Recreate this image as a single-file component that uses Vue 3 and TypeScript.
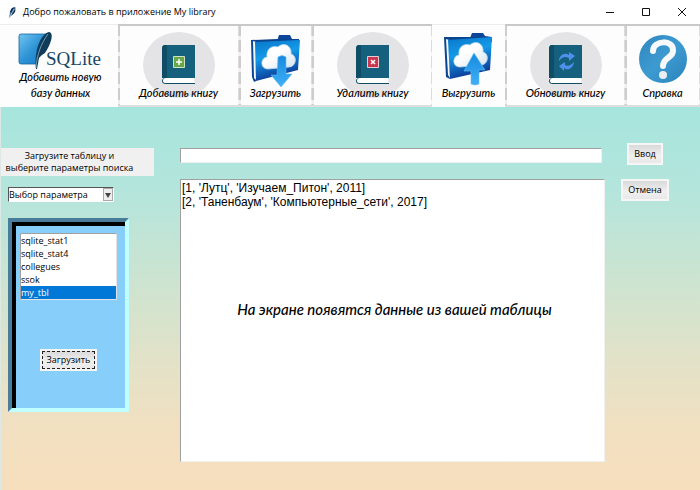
<script setup lang="ts">
import { ref } from 'vue'

type IconKind = 'sqlite' | 'book' | 'folder' | 'help'

interface Tool {
  label: string
  icon: IconKind
  variant?: 'add' | 'remove' | 'refresh' | 'down' | 'up'
  framed: boolean
}

const tools: Tool[] = [
  { label: 'Добавить новую\nбазу данных', icon: 'sqlite', framed: false },
  { label: 'Добавить книгу', icon: 'book', variant: 'add', framed: true },
  { label: 'Загрузить', icon: 'folder', variant: 'down', framed: true },
  { label: 'Удалить книгу', icon: 'book', variant: 'remove', framed: true },
  { label: 'Выгрузить', icon: 'folder', variant: 'up', framed: false },
  { label: 'Обновить книгу', icon: 'book', variant: 'refresh', framed: true },
  { label: 'Справка', icon: 'help', framed: true },
]

const tables = ['sqlite_stat1', 'sqlite_stat4', 'collegues', 'ssok', 'my_tbl']
const selectedTable = ref('my_tbl')
const parameter = ref('Выбор параметра')
const query = ref('')
const output = ref("[1, 'Лутц', 'Изучаем_Питон', 2011]\n[2, 'Таненбаум', 'Компьютерные_сети', 2017]")
</script>

<template>
  <div class="window">
    <header class="titlebar">
      <svg class="feather" viewBox="0 0 10 14" aria-hidden="true">
        <path d="M1 13 2 9C2 5 4 1 8 1c1 4-1 8-5 10Z" fill="#28507c" />
        <path d="M1 13 7 3M3 7l1 2" stroke="#a9cbea" fill="none" />
        <path d="M5 2 3 7M8 5 5 9" stroke="#111e36" fill="none" />
      </svg>
      <h1>Добро пожаловать в приложение My library</h1>
      <div class="controls">
        <button type="button" aria-label="Свернуть">
          <svg viewBox="0 0 10 10"><path d="M1 5.500H9" /></svg>
        </button>
        <button type="button" aria-label="Развернуть">
          <svg viewBox="0 0 10 10"><path d="M1.500 1.500h7v7h-7z" /></svg>
        </button>
        <button type="button" aria-label="Закрыть">
          <svg viewBox="0 0 10 10"><path d="m1 1 8 8M9 1 1 9" /></svg>
        </button>
      </div>
    </header>

    <nav class="toolbar">
      <button v-for="tool in tools" :key="tool.label" type="button" class="tool" :class="{ framed: tool.framed }">
        <svg v-if="tool.icon === 'sqlite'" class="wide" viewBox="0 0 121 83" aria-hidden="true">
          <defs>
            <linearGradient id="sq" x1="0" y1="0" x2="1" y2="1">
              <stop offset="0" stop-color="#72c5ef" /><stop offset="0.500" stop-color="#2e94d6" /><stop offset="1" stop-color="#1178c6" />
            </linearGradient>
          </defs>
          <path d="M21 10H47C40 16 36 27 37 40H21Q19 40 19 38V12Q19 10 21 10Z" fill="url(#sq)" stroke="#11649e" stroke-width="0.800" />
          <path d="M36 45C34 25 41 10 49 8C55 9 50 22 45 29Q41 31 39 34L37 45Z" fill="#103b59" />
          <path d="M36 44C37 30 41 20 48 10" stroke="#7fb4d0" stroke-width="0.800" fill="none" />
          <text x="46" y="41" class="brand">SQLite</text>
        </svg>

        <svg v-else-if="tool.icon === 'book'" class="wide" viewBox="0 0 121 83" aria-hidden="true">
          <ellipse cx="61" cy="41" rx="36" ry="33" fill="#e4e3e6" />
          <path d="M47 21H77V54H44V25Q44 21 47 21Z" fill="#15607d" />
          <path d="M47 21H49V54H44V25Q44 21 47 21Z" fill="#0f4c66" />
          <path d="M77 54H48Q44 54 44 57Q44 60 48 60H77V59H75V55H77Z" fill="#0f4c66" />
          <path d="M77 54H48Q45 54 45 57Q45 59 48 59H77L76 57Z" fill="#fff" />
          <g v-if="tool.variant === 'add'">
            <path d="M55.500 32.500h11v11h-11z" fill="#68a848" stroke="#cfe2c4" />
            <path d="M61 35v6M58 38h6" stroke="#fff" stroke-width="1.500" />
          </g>
          <g v-else-if="tool.variant === 'remove'">
            <path d="M55.500 32.500h11v11h-11z" fill="#c73750" stroke="#e9cdd3" />
            <path d="m59 36 4 4M63 36l-4 4" stroke="#fff" stroke-width="1.500" />
          </g>
          <g v-else fill="#4f8fee">
            <path d="M54 37C54 31 60 28 64 31V28L70 32 64 37V34C60 32 57 33 54 37Z" />
            <path d="M69 38C68 45 62 47 59 44V47L54 42 60 38V41C63 43 66 41 69 38Z" />
          </g>
        </svg>

        <svg v-else-if="tool.icon === 'folder'" class="narrow" viewBox="0 0 73 83" aria-hidden="true">
          <defs>
            <linearGradient id="cover" x1="0" y1="0" x2="0.300" y2="1">
              <stop offset="0" stop-color="#0875c8" /><stop offset="0.450" stop-color="#159ae8" /><stop offset="1" stop-color="#0b3794" />
            </linearGradient>
            <linearGradient id="arrow" x1="0" y1="0" x2="0" y2="1">
              <stop offset="0" stop-color="#1689df" /><stop offset="1" stop-color="#3fb0f7" />
            </linearGradient>
            <linearGradient id="cloud" x1="0" y1="0" x2="1" y2="1">
              <stop offset="0.400" stop-color="#fff" /><stop offset="1" stop-color="#d5e2ee" />
            </linearGradient>
          </defs>
          <g v-if="tool.variant === 'down'">
            <path d="M38 17 40 11H51L53 15 60 15V20H38Z" fill="#0d4598" />
            <path d="M12 16 38 15 60 15 17 20V57L15 58 13 53Z" fill="#0b458e" />
            <path d="M14 17 17 18V56L15 54Z" fill="#f3f8fc" />
            <path d="M16 18 61 16 59 46 17 57Z" fill="url(#cover)" />
            <path d="M29 45C21 45 21 34 28 33C27 25 33 21 39 23C46 17 53 23 52 30C59 32 57 43 50 43Z" fill="url(#cloud)" stroke="#b9d6ea" stroke-width="0.800" />
            <path d="M39 33Q43 30 47 33V50H53L42 63 32 51H38Z" fill="url(#arrow)" stroke="#66bdf2" stroke-width="0.600" />
          </g>
          <g v-else>
            <path d="M38 14 40 9H51L53 12 60 13V18H38Z" fill="#0d4598" />
            <path d="M12 13 38 13 60 13 16 18 18 55 14 53Z" fill="#0b458e" />
            <path d="M14 15 17 16 18 54 16 51Z" fill="#f3f8fc" />
            <path d="M16 16 60 13 58 46 18 55Z" fill="url(#cover)" />
            <path d="M28 43C20 43 20 32 27 31C26 23 32 19 38 21C45 15 52 21 51 28C58 30 56 41 49 41Z" fill="url(#cloud)" stroke="#b9d6ea" stroke-width="0.800" />
            <path d="M42 29 53 46H47V60Q43 62 39 60V47H32Z" fill="url(#arrow)" stroke="#66bdf2" stroke-width="0.600" />
          </g>
        </svg>

        <svg v-else class="narrow" viewBox="0 0 73 83" aria-hidden="true">
          <defs>
            <linearGradient id="help" x1="0" y1="0" x2="1" y2="1">
              <stop offset="0" stop-color="#2f86bd" /><stop offset="0.500" stop-color="#3d9bd2" /><stop offset="1" stop-color="#2b83bb" />
            </linearGradient>
          </defs>
          <circle cx="37" cy="35" r="24" fill="url(#help)" />
          <path d="M27 27C27 16 48 15 47 27C47 34 37 33 37 42" fill="none" stroke="#f7f9fa" stroke-width="6" stroke-linecap="round" />
          <circle cx="37" cy="51" r="4" fill="#eceff1" />
        </svg>
        <span class="caption">{{ tool.label }}</span>
      </button>
    </nav>

    <main class="workspace">
      <aside class="sidebar">
        <label class="hint" for="parameter">Загрузите таблицу и<br />выберите параметры поиска</label>
        <div class="combo">
          <select id="parameter" v-model="parameter">
            <option>Выбор параметра</option>
          </select>
          <span class="drop" aria-hidden="true">
            <svg viewBox="0 0 8 8"><path d="M1 2h6L4 7Z" fill="#444" /></svg>
          </span>
        </div>
        <section class="tables">
          <select v-model="selectedTable" size="5" aria-label="Таблицы">
            <option v-for="name in tables" :key="name" :value="name">{{ name }}</option>
          </select>
          <button type="button" class="push focused">Загрузить</button>
        </section>
      </aside>

      <section class="results">
        <input v-model="query" type="text" aria-label="Поиск" />
        <div class="screen">
          <textarea v-model="output" aria-label="Данные таблицы" spellcheck="false"></textarea>
          <p class="note">На экране появятся данные из вашей таблицы</p>
        </div>
      </section>

      <div class="actions">
        <button type="button" class="push">Ввод</button>
        <button type="button" class="push">Отмена</button>
      </div>
    </main>
  </div>
</template>

<style>
body {
  margin: 0;
}
</style>

<style scoped>
* {
  box-sizing: border-box;
}

.window {
  display: flex;
  flex-direction: column;
  min-height: 100vh;
  background: #fff;
  color: #000;
  font: 9px/12px "Open Sans", "Noto Sans", sans-serif;
}

button,
select {
  font: inherit;
  color: inherit;
}

.titlebar {
  display: flex;
  align-items: center;
  height: 24px;
  padding-left: 8px;
}

.feather {
  width: 9px;
  height: 13px;
}

h1 {
  flex: 1;
  margin: 0 0 0 6px;
  font-size: 9px;
  font-weight: 400;
  white-space: nowrap;
}

.controls {
  display: flex;
}

.controls button {
  display: grid;
  place-items: center;
  width: 36px;
  height: 24px;
  padding: 0;
  border: 0;
  background: none;
}

.controls svg {
  width: 10px;
  height: 10px;
  fill: none;
  stroke: #111;
}

.toolbar {
  display: grid;
  grid-template-columns: 118fr 121fr 73fr 120fr 73fr 120fr 75fr;
}

.tool {
  display: grid;
  justify-items: center;
  min-width: 0;
  height: 83px;
  padding: 0;
  border: 0;
  background: linear-gradient(#ececec, #ececec) top / 100% 1px no-repeat #fdfdfd;
}

.tool.framed {
  background:
    linear-gradient(#c9c9c9, #c9c9c9) top / 100% 2px no-repeat,
    linear-gradient(#dedede, #dedede) bottom / 100% 2px no-repeat,
    repeating-linear-gradient(#cdcdcd 0 12px, #eee 12px 16px) left / 2px 100% no-repeat,
    repeating-linear-gradient(#dcdcdc 0 12px, #f6f6f6 12px 16px) right / 1px 100% no-repeat,
    #fdfdfd;
}

.tool svg,
.caption {
  grid-area: 1 / 1;
}

.tool svg {
  height: 83px;
}

.wide {
  width: 121px;
}

.narrow {
  width: 73px;
}

.brand {
  fill: #164563;
  font: 19px "Liberation Serif", serif;
}

.caption {
  align-self: end;
  padding-bottom: 6px;
  font: italic 500 11px/16px "Lato", "Open Sans", sans-serif;
  white-space: pre;
}

.workspace {
  flex: 1;
  display: grid;
  grid-template-columns: 153px minmax(0, 1fr) 46px;
  column-gap: 17px;
  padding: 36px 32px 28px 0;
  border-left: 1px solid #dce8e4;
  background: linear-gradient(180deg, #a6e5dd 0%, #b4e5dc 22%, #c9e4d2 42%, #e0e2c9 64%, #f0e0c1 82%, #f7dfbd 100%);
}

.sidebar {
  padding-top: 5px;
}

.hint {
  display: block;
  padding: 2px 16px 2px 0;
  background: #f0f0f0;
  text-align: center;
}

.combo {
  display: flex;
  width: 106px;
  height: 15px;
  margin: 11px 0 0 7px;
  border: 1px solid #fff;
  border-top-color: #555;
  border-left-color: #555;
  background: #fff;
}

.combo select {
  flex: 1;
  min-width: 0;
  padding: 0;
  border: 0;
  appearance: none;
  background: none;
}

.drop {
  display: grid;
  place-items: center;
  width: 10px;
  border: 1px solid #aaa;
  background: #eee;
}

.drop svg {
  width: 8px;
  height: 8px;
}

.tables {
  display: flex;
  flex-direction: column;
  align-items: center;
  width: 121px;
  height: 194px;
  margin: 16px 0 0 7px;
  padding: 7px 5px;
  border: 4px solid;
  border-color: #4a7d9c #c0ffff #c0ffff #4a7d9c;
  background: #87cefa;
  box-shadow: inset 4px 4px #000;
}

.tables select {
  flex: none;
  width: 97px;
  height: 67px;
  margin-top: 4px;
  padding: 0;
  border: 1px solid #e3e3e3;
  border-top-color: #a0a0a0;
  border-left-color: #a0a0a0;
  background: #fff;
  overflow: hidden;
  outline: 0;
}

.tables option {
  height: 13px;
  min-height: 0;
  padding: 0;
  line-height: 13px;
}

.tables option:checked {
  background: #0078d7 linear-gradient(#0078d7, #0078d7);
  color: #fff;
}

.push {
  height: 22px;
  padding: 0 5px;
  border: 2px solid #f6f6f6;
  background: linear-gradient(#d9d9d9, #f0f0f0 60%, #e8e8e8);
  white-space: nowrap;
}

.focused {
  margin-top: 49px;
  outline: 1px dashed #222;
  outline-offset: -3px;
}

.results {
  display: flex;
  flex-direction: column;
  gap: 16px;
  padding: 5px 0 0 9px;
}

input,
textarea {
  display: block;
  padding: 0 1px;
  border: 1px solid #f0f0f0;
  border-top-color: #a0a0a0;
  border-left-color: #a0a0a0;
  border-radius: 0;
  background: #fff;
  color: #000;
  font: 12px/14px "Liberation Sans", Arial, sans-serif;
}

input {
  height: 15px;
  margin-right: 3px;
}

.screen {
  flex: 1;
  position: relative;
  display: flex;
}

textarea {
  flex: 1;
  min-width: 0;
  padding-top: 1px;
  resize: none;
  outline: 0;
}

.note {
  position: absolute;
  inset: 0;
  display: grid;
  place-items: center;
  margin: 0;
  padding: 0 0 24px 4px;
  font: italic 500 15px/20px "Lato", "Open Sans", sans-serif;
  pointer-events: none;
}

.actions {
  display: flex;
  flex-direction: column;
  align-items: center;
  gap: 14px;
}
</style>
